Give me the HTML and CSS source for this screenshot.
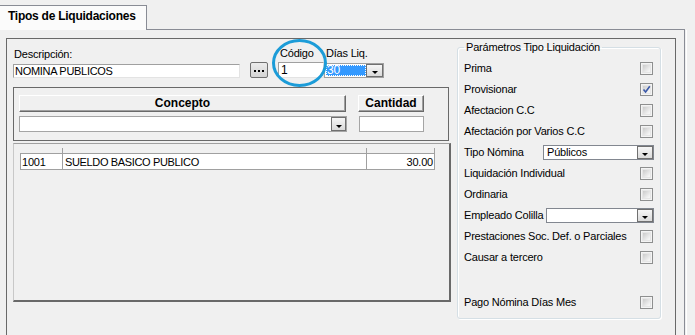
FILE: index.html
```html
<!DOCTYPE html>
<html lang="es">
<head>
<meta charset="utf-8">
<title>Tipos de Liquidaciones</title>
<link rel="stylesheet" href="styles.css">
</head>
<body>
<div class="window">
  <div class="tabstrip">
    <div class="tab">Tipos de Liquidaciones</div>
    <div class="tab-fill"></div>
  </div>
  <div class="page">
    <div class="panel">
      <div class="main">
        <div class="toprow">
          <div class="field f-desc">
            <label>Descripción:</label>
            <div class="input desc">NOMINA PUBLICOS</div>
          </div>
          <div class="dots-btn"><span></span><span></span><span></span></div>
          <div class="field f-cod">
            <label>Código</label>
            <div class="input cod">1</div>
          </div>
          <div class="field f-dias">
            <label>Días Liq.</label>
            <div class="combo dias"><div class="combo-text"><span class="sel">30</span></div><div class="arrow"></div></div>
          </div>
        </div>

        <div class="concept">
          <div class="crow">
            <div class="hbtn h-concepto">Concepto</div>
            <div class="hbtn h-cantidad">Cantidad</div>
          </div>
          <div class="crow crow2">
            <div class="combo c-concepto"><div class="combo-text"></div><div class="arrow"></div></div>
            <div class="input c-cantidad"></div>
          </div>
        </div>

        <div class="grid">
          <div class="gh"><span class="t1"></span><span class="t2"></span><span class="t3"></span></div>
          <div class="grow">
            <div class="gc c1">1001</div>
            <div class="gc c2">SUELDO BASICO PUBLICO</div>
            <div class="gc c3">30.00</div>
          </div>
        </div>
      </div>

      <fieldset class="params">
        <legend>Parámetros Tipo Liquidación</legend>
        <div class="prow"><span>Prima</span><span class="cb"></span></div>
        <div class="prow"><span>Provisionar</span><span class="cb checked"><svg viewBox="0 0 9 9" width="9" height="9"><path d="M1.5 4.5 L3.6 7 L7.8 1.2" fill="none" stroke="#3a58a8" stroke-width="1.6"/></svg></span></div>
        <div class="prow"><span>Afectacion C.C</span><span class="cb"></span></div>
        <div class="prow"><span>Afectación por Varios C.C</span><span class="cb"></span></div>
        <div class="prow"><span>Tipo Nómina</span><div class="combo p-tipo"><div class="combo-text">Públicos</div><div class="arrow"></div></div></div>
        <div class="prow"><span>Liquidación Individual</span><span class="cb"></span></div>
        <div class="prow"><span>Ordinaria</span><span class="cb"></span></div>
        <div class="prow"><span>Empleado Colilla</span><div class="combo p-colilla"><div class="combo-text"></div><div class="arrow"></div></div></div>
        <div class="prow"><span>Prestaciones Soc. Def. o Parciales</span><span class="cb"></span></div>
        <div class="prow"><span>Causar a tercero</span><span class="cb"></span></div>
        <div class="prow p-pago"><span>Pago Nómina Días Mes</span><span class="cb"></span></div>
      </fieldset>
    </div>
  </div>
</div>
<svg class="annot" width="695" height="335" viewBox="0 0 695 335"><ellipse cx="299.5" cy="63" rx="26" ry="22.5" fill="none" stroke="#1c9cd8" stroke-width="3"/></svg>
</body>
</html>
```

FILE: styles.css
```css
html, body {
  margin: 0;
  padding: 0;
  background: #f0f0f0;
  color: #000;
  font: 11px/13px "Liberation Sans", Arial, sans-serif;
  letter-spacing: -0.2px;
  overflow: hidden;
}

.window {
  width: 685px;
}

.tabstrip {
  display: flex;
  height: 30px;
}

.tab {
  box-sizing: border-box;
  width: 147px;
  height: 25px;
  margin-top: 5px;
  padding: 3px 0 0 8px;
  border-top: 1px solid #898c95;
  border-right: 1px solid #898c95;
  background: #fbfbfb;
  font-weight: bold;
  font-size: 12px;
  line-height: 14px;
  letter-spacing: -0.25px;
}

.tab-fill {
  flex: 1;
  border-bottom: 1px solid #898c95;
}

.page {
  box-sizing: border-box;
  width: 685px;
  height: 305px;
  padding: 8px 0 0 6px;
  border-right: 1px solid #898c95;
  box-shadow: 1px 0 0 #f0f0f0, 2px 0 0 #fff;
}

.panel {
  box-sizing: border-box;
  width: 670px;
  height: 320px;
  padding: 0 0 0 6px;
  border: 1px solid #696969;
  display: flex;
  align-items: flex-start;
}

.main {
  width: 438px;
  display: flex;
  flex-direction: column;
}

/* top row */
.toprow {
  display: flex;
  align-items: flex-end;
  height: 31px;
  margin-top: 8px;
}

.field {
  display: flex;
  flex-direction: column;
}

.field label {
  display: block;
  white-space: nowrap;
}

.f-desc label { margin-bottom: 3px; padding-left: 1px; }
.f-cod label { margin-bottom: 2px; padding-left: 2px; }
.f-dias label { margin-bottom: 3px; padding-left: 2px; }

.input {
  box-sizing: border-box;
  background: #fff;
  border: 1px solid;
  border-color: #a0a0a0 #e3e3e3 #e3e3e3 #a0a0a0;
  white-space: nowrap;
  overflow: hidden;
}

.input.desc {
  width: 227px;
  height: 14px;
  line-height: 12px;
  padding-left: 1px;
  letter-spacing: -0.3px;
}

.dots-btn {
  box-sizing: border-box;
  width: 18px;
  height: 16px;
  margin-left: 10px;
  border: 1px solid #707070;
  border-radius: 2px;
  background: linear-gradient(#ececec, #d4d4d4);
  display: flex;
  align-items: center;
  justify-content: center;
  gap: 2px;
  padding-top: 1px;
}

.dots-btn span {
  width: 2px;
  height: 2px;
  background: #000;
}

.f-cod { margin-left: 10px; }

.input.cod {
  width: 46px;
  height: 16px;
  line-height: 14px;
  padding-left: 2px;
  font-size: 12px;
}

.combo {
  box-sizing: border-box;
  display: flex;
  background: #fff;
  border: 1px solid #a0a0a0;
}

.combo-text {
  flex: 1;
  min-width: 0;
  overflow: hidden;
  white-space: nowrap;
  padding-left: 2px;
}

.arrow {
  box-sizing: border-box;
  width: 16px;
  border: 1px solid #707070;
  background: linear-gradient(#f6f6f6, #dadada);
  display: flex;
  align-items: flex-end;
  justify-content: center;
  padding-bottom: 2px;
}

.arrow::after {
  content: "";
  width: 0;
  height: 0;
  border-left: 3px solid transparent;
  border-right: 3px solid transparent;
  border-top: 3px solid #000;
}

.combo.dias {
  width: 60px;
  height: 15px;
  border-color: #a0a0a0;
}

.combo.dias .combo-text {
  padding: 1px 0 1px 1px;
  display: flex;
}

.sel {
  flex: 1;
  background: #3399ff;
  color: #fff;
  line-height: 11px;
  font-size: 12px;
  padding-left: 1px;
  outline: 1px dotted #fff;
  outline-offset: -1px;
}

.combo.dias .arrow { width: 17px; }

/* concept box */
.concept {
  box-sizing: border-box;
  width: 436px;
  height: 54px;
  margin-top: 9px;
  padding: 7px 0 0 5px;
  border: 1px solid #696969;
}

.crow {
  display: flex;
  gap: 12px;
}

.crow2 { margin-top: 4px; }

.hbtn {
  box-sizing: border-box;
  height: 17px;
  font-weight: bold;
  font-size: 12px;
  line-height: 15px;
  letter-spacing: 0;
  text-align: center;
  background: #f0f0f0;
  border: 1px solid;
  border-color: #fff #696969 #696969 #fff;
  box-shadow: inset -1px -1px 0 #a0a0a0;
}

.h-concepto { width: 327px; }
.h-cantidad { width: 66px; }

.combo.c-concepto {
  width: 328px;
  height: 16px;
  border-color: #a5a5a5;
}

.combo.c-concepto .arrow { width: 15px; }

.input.c-cantidad {
  width: 65px;
  height: 16px;
  border: 1px solid #a5a5a5;
}

/* grid */
.grid {
  box-sizing: border-box;
  width: 438px;
  height: 159px;
  margin-top: 2px;
  padding: 4px 0 0 6px;
  border-top: 1px solid #a0a0a0;
  border-left: 1px solid #c8c8c8;
  border-right: 2px solid #696969;
  border-bottom: 2px solid #696969;
}

.gh {
  display: flex;
  height: 5px;
}

.gh span { display: block; height: 5px; }
.gh .t1 { width: 42px; }
.gh .t2 { width: 303px; border-left: 1px solid #a0a0a0; }
.gh .t3 { width: 67px; border-left: 1px solid #a0a0a0; border-right: 1px solid #a0a0a0; }

.grow {
  box-sizing: border-box;
  display: flex;
  width: 415px;
  height: 17px;
  border: 1px solid #a0a0a0;
  background: #fff;
}

.gc {
  box-sizing: border-box;
  padding-top: 2px;
  white-space: nowrap;
  overflow: hidden;
}

.c1 { width: 41px; padding-left: 1px; }
.c2 { width: 304px; border-left: 1px solid #a0a0a0; padding-left: 2px; letter-spacing: -0.35px; }
.c3 { width: 68px; border-left: 1px solid #a0a0a0; text-align: right; padding-right: 1px; }

/* parameters group */
.params {
  box-sizing: border-box;
  width: 204px;
  height: 278px;
  margin: 2px 0 0 6px;
  padding: 4px 7px 0 6px;
  border: 1px solid #d5dfe5;
  border-radius: 3px;
  box-shadow: inset 1px 1px 0 #fff, 1px 1px 0 #fff;
  min-width: 0;
}

.params legend {
  padding: 0 2px;
  line-height: 13px;
}

.prow {
  display: flex;
  align-items: center;
  justify-content: space-between;
  height: 21px;
  white-space: nowrap;
}

.p-pago { margin-top: 24px; }

.cb {
  box-sizing: border-box;
  width: 13px;
  height: 13px;
  border: 1px solid #8e8f8f;
  background: #f4f4f4;
  padding: 1px;
  display: flex;
}

.cb::before {
  content: "";
  flex: 1;
  background: linear-gradient(135deg, #cbcbcb, #f4f4f4 85%);
  border: 1px solid #e6e6e6;
}

.cb.checked { position: relative; }

.cb.checked svg {
  position: absolute;
  left: 1px;
  top: 1px;
}

.combo.p-tipo {
  width: 111px;
  height: 15px;
  margin-right: -1px;
  border-color: #828790;
}

.combo.p-tipo .combo-text { line-height: 13px; padding-left: 3px; }

.combo.p-colilla {
  width: 108px;
  height: 15px;
  margin-right: -1px;
  border-color: #828790;
}

.annot {
  position: absolute;
  left: 0;
  top: 0;
  pointer-events: none;
}
```
